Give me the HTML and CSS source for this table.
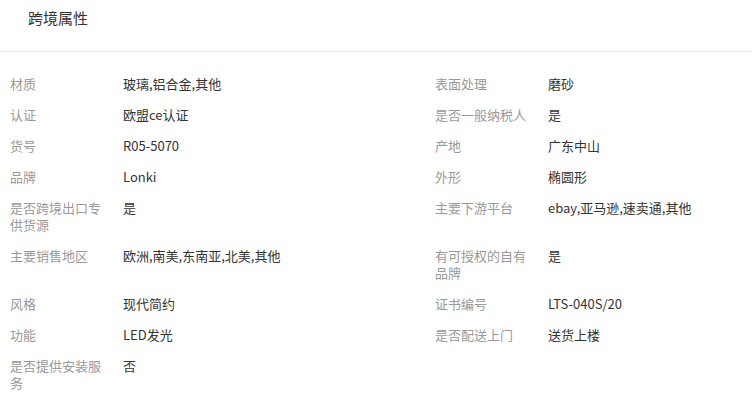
FILE: index.html
```html
<!DOCTYPE html>
<html lang="zh-CN">
<head>
<meta charset="utf-8">
<title>跨境属性</title>
<link rel="stylesheet" href="styles.css">
</head>
<body>
<div class="panel">
  <div class="panel-head">跨境属性</div>
  <div class="attrs">
    <div class="attr"><div class="attr-name">材质</div><div class="attr-value">玻璃,铝合金,其他</div></div>
    <div class="attr"><div class="attr-name">表面处理</div><div class="attr-value">磨砂</div></div>
    <div class="attr"><div class="attr-name">认证</div><div class="attr-value">欧盟ce认证</div></div>
    <div class="attr"><div class="attr-name">是否一般纳税人</div><div class="attr-value">是</div></div>
    <div class="attr"><div class="attr-name">货号</div><div class="attr-value">R05-5070</div></div>
    <div class="attr"><div class="attr-name">产地</div><div class="attr-value">广东中山</div></div>
    <div class="attr"><div class="attr-name">品牌</div><div class="attr-value">Lonki</div></div>
    <div class="attr"><div class="attr-name">外形</div><div class="attr-value">椭圆形</div></div>
    <div class="attr"><div class="attr-name">是否跨境出口专供货源</div><div class="attr-value">是</div></div>
    <div class="attr"><div class="attr-name">主要下游平台</div><div class="attr-value">ebay,亚马逊,速卖通,其他</div></div>
    <div class="attr"><div class="attr-name">主要销售地区</div><div class="attr-value">欧洲,南美,东南亚,北美,其他</div></div>
    <div class="attr"><div class="attr-name">有可授权的自有品牌</div><div class="attr-value">是</div></div>
    <div class="attr"><div class="attr-name">风格</div><div class="attr-value">现代简约</div></div>
    <div class="attr"><div class="attr-name">证书编号</div><div class="attr-value">LTS-040S/20</div></div>
    <div class="attr"><div class="attr-name">功能</div><div class="attr-value">LED发光</div></div>
    <div class="attr"><div class="attr-name">是否配送上门</div><div class="attr-value">送货上楼</div></div>
    <div class="attr"><div class="attr-name">是否提供安装服务</div><div class="attr-value">否</div></div>
  </div>
</div>
</body>
</html>
```
FILE: styles.css
```css
html, body {
  margin: 0;
  padding: 0;
  background: #fff;
}
body {
  font-family: "Noto Sans CJK SC", "Liberation Sans", sans-serif;
  color: #333;
  overflow: hidden;
}
.panel-head {
  box-sizing: border-box;
  height: 52px;
  padding: 8px 28px 0;
  font-size: 15px;
  line-height: 20px;
  color: #333;
  border-bottom: 1px solid #e8e8e8;
}
.attrs {
  display: grid;
  grid-template-columns: 425px 1fr;
  row-gap: 14px;
  padding: 23px 0 0 10px;
}
.attr {
  display: flex;
  gap: 13px;
  font-size: 13px;
  line-height: 17px;
}
.attr-name {
  flex: 0 0 100px;
  color: #999;
}
.attr-value {
  flex: 1;
  color: #333;
}
```
